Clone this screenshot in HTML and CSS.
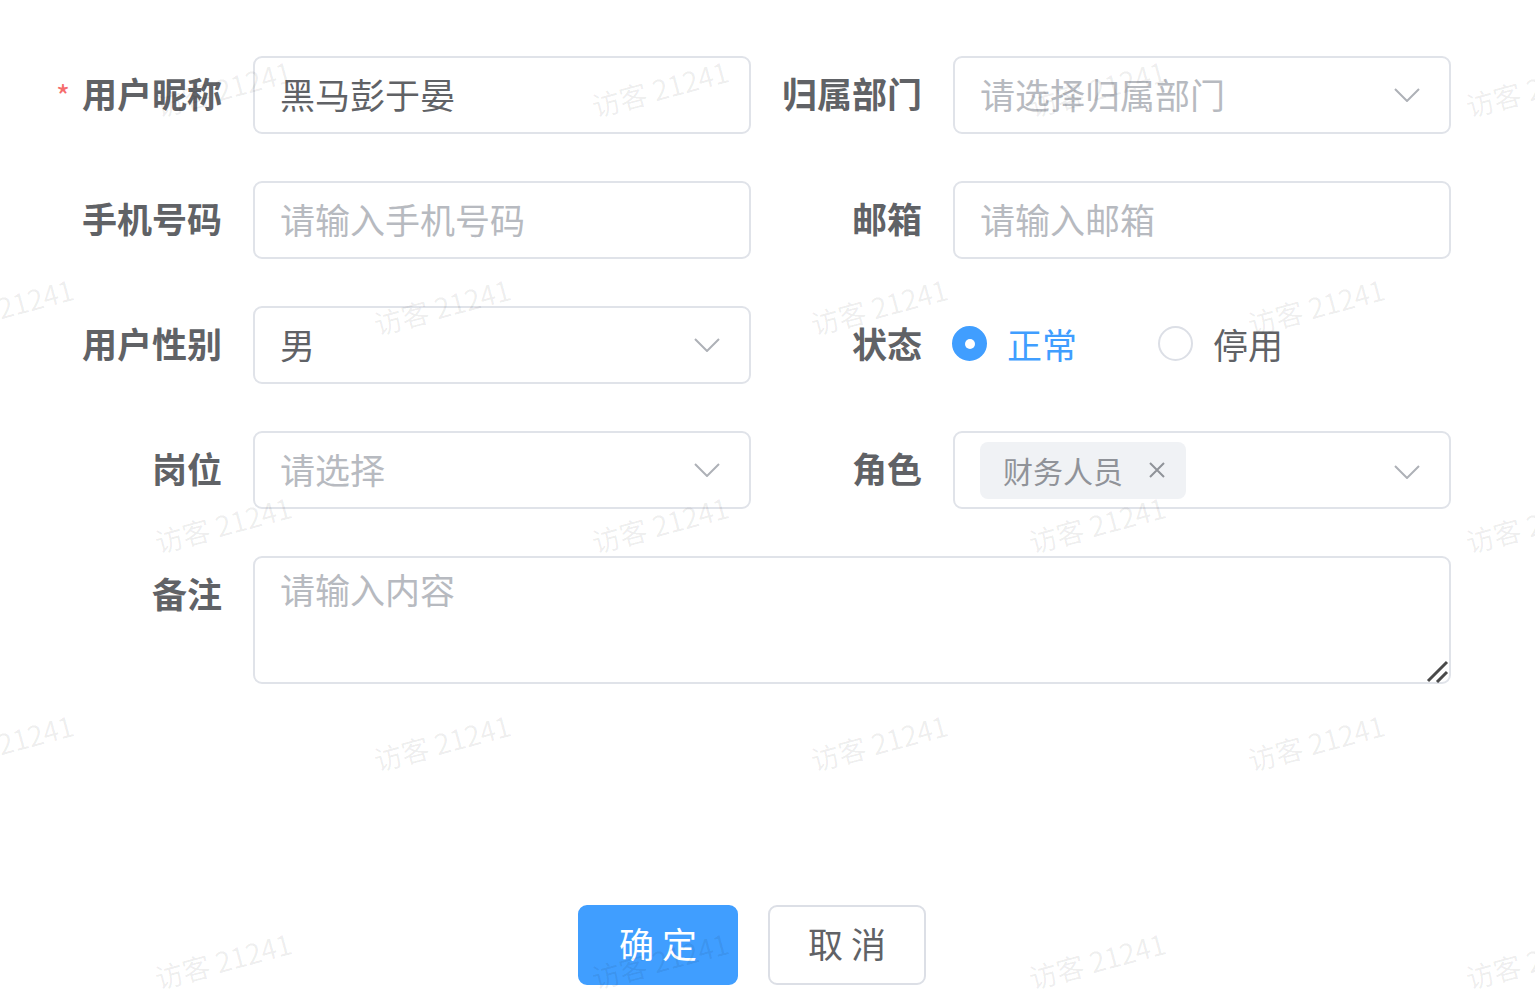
FILE: index.html
```html
<!DOCTYPE html>
<html lang="zh-CN">
<head>
  <meta charset="UTF-8" />
  <meta name="viewport" content="width=device-width, initial-scale=1.0"/>
  <title>修改用户</title>
  <link rel="stylesheet" href="styles.css">
</head>
<body>
  <div class="page">
    <form class="user-form">
      <div class="form-grid">
        <div class="form-item">
          <label class="item-label required">用户昵称</label>
          <div class="el-input"><input type="text" value="黑马彭于晏" placeholder="请输入用户昵称"></div>
        </div>
        <div class="form-item">
          <label class="item-label">归属部门</label>
          <div class="el-input">
            <input type="text" placeholder="请选择归属部门" readonly>
            <svg class="arrow" viewBox="0 0 26 14"><polyline points="1,1 13,13 25,1"/></svg>
          </div>
        </div>

        <div class="form-item">
          <label class="item-label">手机号码</label>
          <div class="el-input"><input type="text" placeholder="请输入手机号码"></div>
        </div>
        <div class="form-item">
          <label class="item-label">邮箱</label>
          <div class="el-input"><input type="text" placeholder="请输入邮箱"></div>
        </div>

        <div class="form-item">
          <label class="item-label">用户性别</label>
          <div class="el-input">
            <input type="text" value="男" readonly>
            <svg class="arrow" viewBox="0 0 26 14"><polyline points="1,1 13,13 25,1"/></svg>
          </div>
        </div>
        <div class="form-item">
          <label class="item-label">状态</label>
          <div class="radio-group">
            <span class="radio checked"><span class="radio-dot"></span>正常</span>
            <span class="radio"><span class="radio-dot"></span>停用</span>
          </div>
        </div>

        <div class="form-item">
          <label class="item-label">岗位</label>
          <div class="el-input">
            <input type="text" placeholder="请选择" readonly>
            <svg class="arrow" viewBox="0 0 26 14"><polyline points="1,1 13,13 25,1"/></svg>
          </div>
        </div>
        <div class="form-item">
          <label class="item-label">角色</label>
          <div class="el-input tags">
            <span class="tag">财务人员
              <svg class="tag-close" viewBox="0 0 18 18"><path d="M2 2 L16 16 M16 2 L2 16"/></svg>
            </span>
            <span class="spacer"></span>
            <svg class="arrow" viewBox="0 0 26 14"><polyline points="1,1 13,13 25,1"/></svg>
          </div>
        </div>

        <div class="form-item full">
          <label class="item-label">备注</label>
          <div class="textarea-wrap">
            <textarea placeholder="请输入内容"></textarea>
            <svg class="resize-handle" viewBox="0 0 24 24"><path d="M3 22 L22 3 M12 23 L22 13"/></svg>
          </div>
        </div>
      </div>
    </form>

    <div class="dialog-footer">
      <button class="btn btn-primary">确 定</button>
      <button class="btn">取 消</button>
    </div>

    <div class="watermark">
      <div class="wm-row">
        <span><i>访客 21241</i></span><span><i>访客 21241</i></span><span><i>访客 21241</i></span><span><i>访客 21241</i></span>
      </div>
      <div class="wm-row shift">
        <span><i>访客 21241</i></span><span><i>访客 21241</i></span><span><i>访客 21241</i></span><span><i>访客 21241</i></span><span><i>访客 21241</i></span>
      </div>
      <div class="wm-row">
        <span><i>访客 21241</i></span><span><i>访客 21241</i></span><span><i>访客 21241</i></span><span><i>访客 21241</i></span>
      </div>
      <div class="wm-row shift">
        <span><i>访客 21241</i></span><span><i>访客 21241</i></span><span><i>访客 21241</i></span><span><i>访客 21241</i></span><span><i>访客 21241</i></span>
      </div>
      <div class="wm-row">
        <span><i>访客 21241</i></span><span><i>访客 21241</i></span><span><i>访客 21241</i></span><span><i>访客 21241</i></span>
      </div>
    </div>
  </div>
</body>
</html>
```

FILE: styles.css
```css
body {
  margin: 0;
  background-color: white;
  font-family: "Noto Sans CJK SC", "Noto Sans", sans-serif;
  color: #606266;
}

.page {
  position: relative;
  height: 1001px;
  overflow: hidden;
}

.user-form {
  padding-top: 56px;
}

.form-grid {
  display: grid;
  grid-template-columns: 672px 672px;
  column-gap: 28px;
  row-gap: 47px;
  margin-left: 79px;
}

.form-item {
  display: flex;
  height: 78px;
}

.form-item.full {
  grid-column: 1 / -1;
  height: 128px;
}

.item-label {
  flex: 0 0 174px;
  box-sizing: border-box;
  padding-right: 31px;
  text-align: right;
  font-size: 35px;
  font-weight: bold;
  line-height: 74px;
  color: #606266;
  white-space: nowrap;
}

.item-label.required::before {
  content: "*";
  color: #f56c6c;
  margin-left: -40px;
  margin-right: 12px;
  font-weight: normal;
  font-size: 30px;
}

.el-input {
  flex: 1;
  display: flex;
  align-items: center;
  box-sizing: border-box;
  border: 2px solid #e0e3e9;
  border-radius: 9px;
  padding: 0 29px 3px 25px;
  background-color: white;
}

.el-input input {
  flex: 1;
  min-width: 0;
  border: none;
  outline: none;
  padding: 0;
  font-family: inherit;
  font-size: 35px;
  color: #606266;
  background: transparent;
}

.el-input input::placeholder,
textarea::placeholder {
  color: #b7bac0;
}

.arrow {
  width: 26px;
  height: 14px;
  flex: none;
  margin-top: 3px;
  fill: none;
  stroke: #aeb1b7;
  stroke-width: 2;
}

.tags {
  padding-bottom: 0;
}

.tags .spacer {
  flex: 1;
}

.tag {
  display: flex;
  align-items: center;
  height: 57px;
  padding: 0 20px 0 23px;
  background-color: #f0f2f5;
  border-radius: 8px;
  font-size: 30px;
  color: #909399;
}

.tag-close {
  width: 18px;
  height: 18px;
  margin-left: 25px;
  fill: none;
  stroke: #909399;
  stroke-width: 2;
}

.radio-group {
  display: flex;
  align-items: center;
  padding-bottom: 3px;
}

.radio {
  display: flex;
  align-items: center;
  font-size: 35px;
  color: #606266;
  margin-right: 81px;
}

.radio-dot {
  width: 35px;
  height: 35px;
  box-sizing: border-box;
  border: 2px solid #dcdfe6;
  border-radius: 50%;
  margin-right: 20px;
  background-color: white;
  position: relative;
}

.radio.checked {
  color: #409eff;
}

.radio.checked .radio-dot {
  margin-left: -1px;
  border-color: #409eff;
  background-color: #409eff;
}

.radio.checked .radio-dot::after {
  content: "";
  position: absolute;
  width: 10px;
  height: 10px;
  border-radius: 50%;
  background-color: white;
  left: 50%;
  top: 50%;
  transform: translate(-50%, -50%);
}

.textarea-wrap {
  flex: 1;
  position: relative;
  display: flex;
}

textarea {
  flex: 1;
  box-sizing: border-box;
  border: 2px solid #e0e3e9;
  border-radius: 9px;
  padding: 8px 25px;
  font-family: inherit;
  font-size: 35px;
  line-height: 46px;
  color: #606266;
  resize: none;
  outline: none;
}

.resize-handle {
  position: absolute;
  right: 2px;
  bottom: 1px;
  width: 24px;
  height: 24px;
  fill: none;
  stroke: #4a4a4a;
  stroke-width: 3;
}

.dialog-footer {
  display: flex;
  gap: 30px;
  margin-top: 221px;
  padding-left: 578px;
}

.btn {
  width: 158px;
  height: 80px;
  box-sizing: border-box;
  border: 2px solid #dcdfe6;
  border-radius: 9px;
  background-color: white;
  font-family: inherit;
  font-size: 35px;
  color: #606266;
  padding: 0 0 6px;
}

.btn-primary {
  width: 160px;
  background-color: #409eff;
  border-color: #409eff;
  color: white;
}

.watermark {
  position: absolute;
  top: -21px;
  left: 0;
  right: 0;
  bottom: 0;
  pointer-events: none;
}

.wm-row {
  display: flex;
  height: 218px;
  margin-left: 4px;
}

.wm-row.shift {
  margin-left: -214px;
}

.wm-row span {
  flex: 0 0 437px;
  display: flex;
  align-items: center;
  justify-content: center;
}

.wm-row i {
  font-style: normal;
  font-size: 28px;
  color: rgba(0, 0, 0, 0.07);
  white-space: nowrap;
  transform: rotate(-15deg);
}
```
